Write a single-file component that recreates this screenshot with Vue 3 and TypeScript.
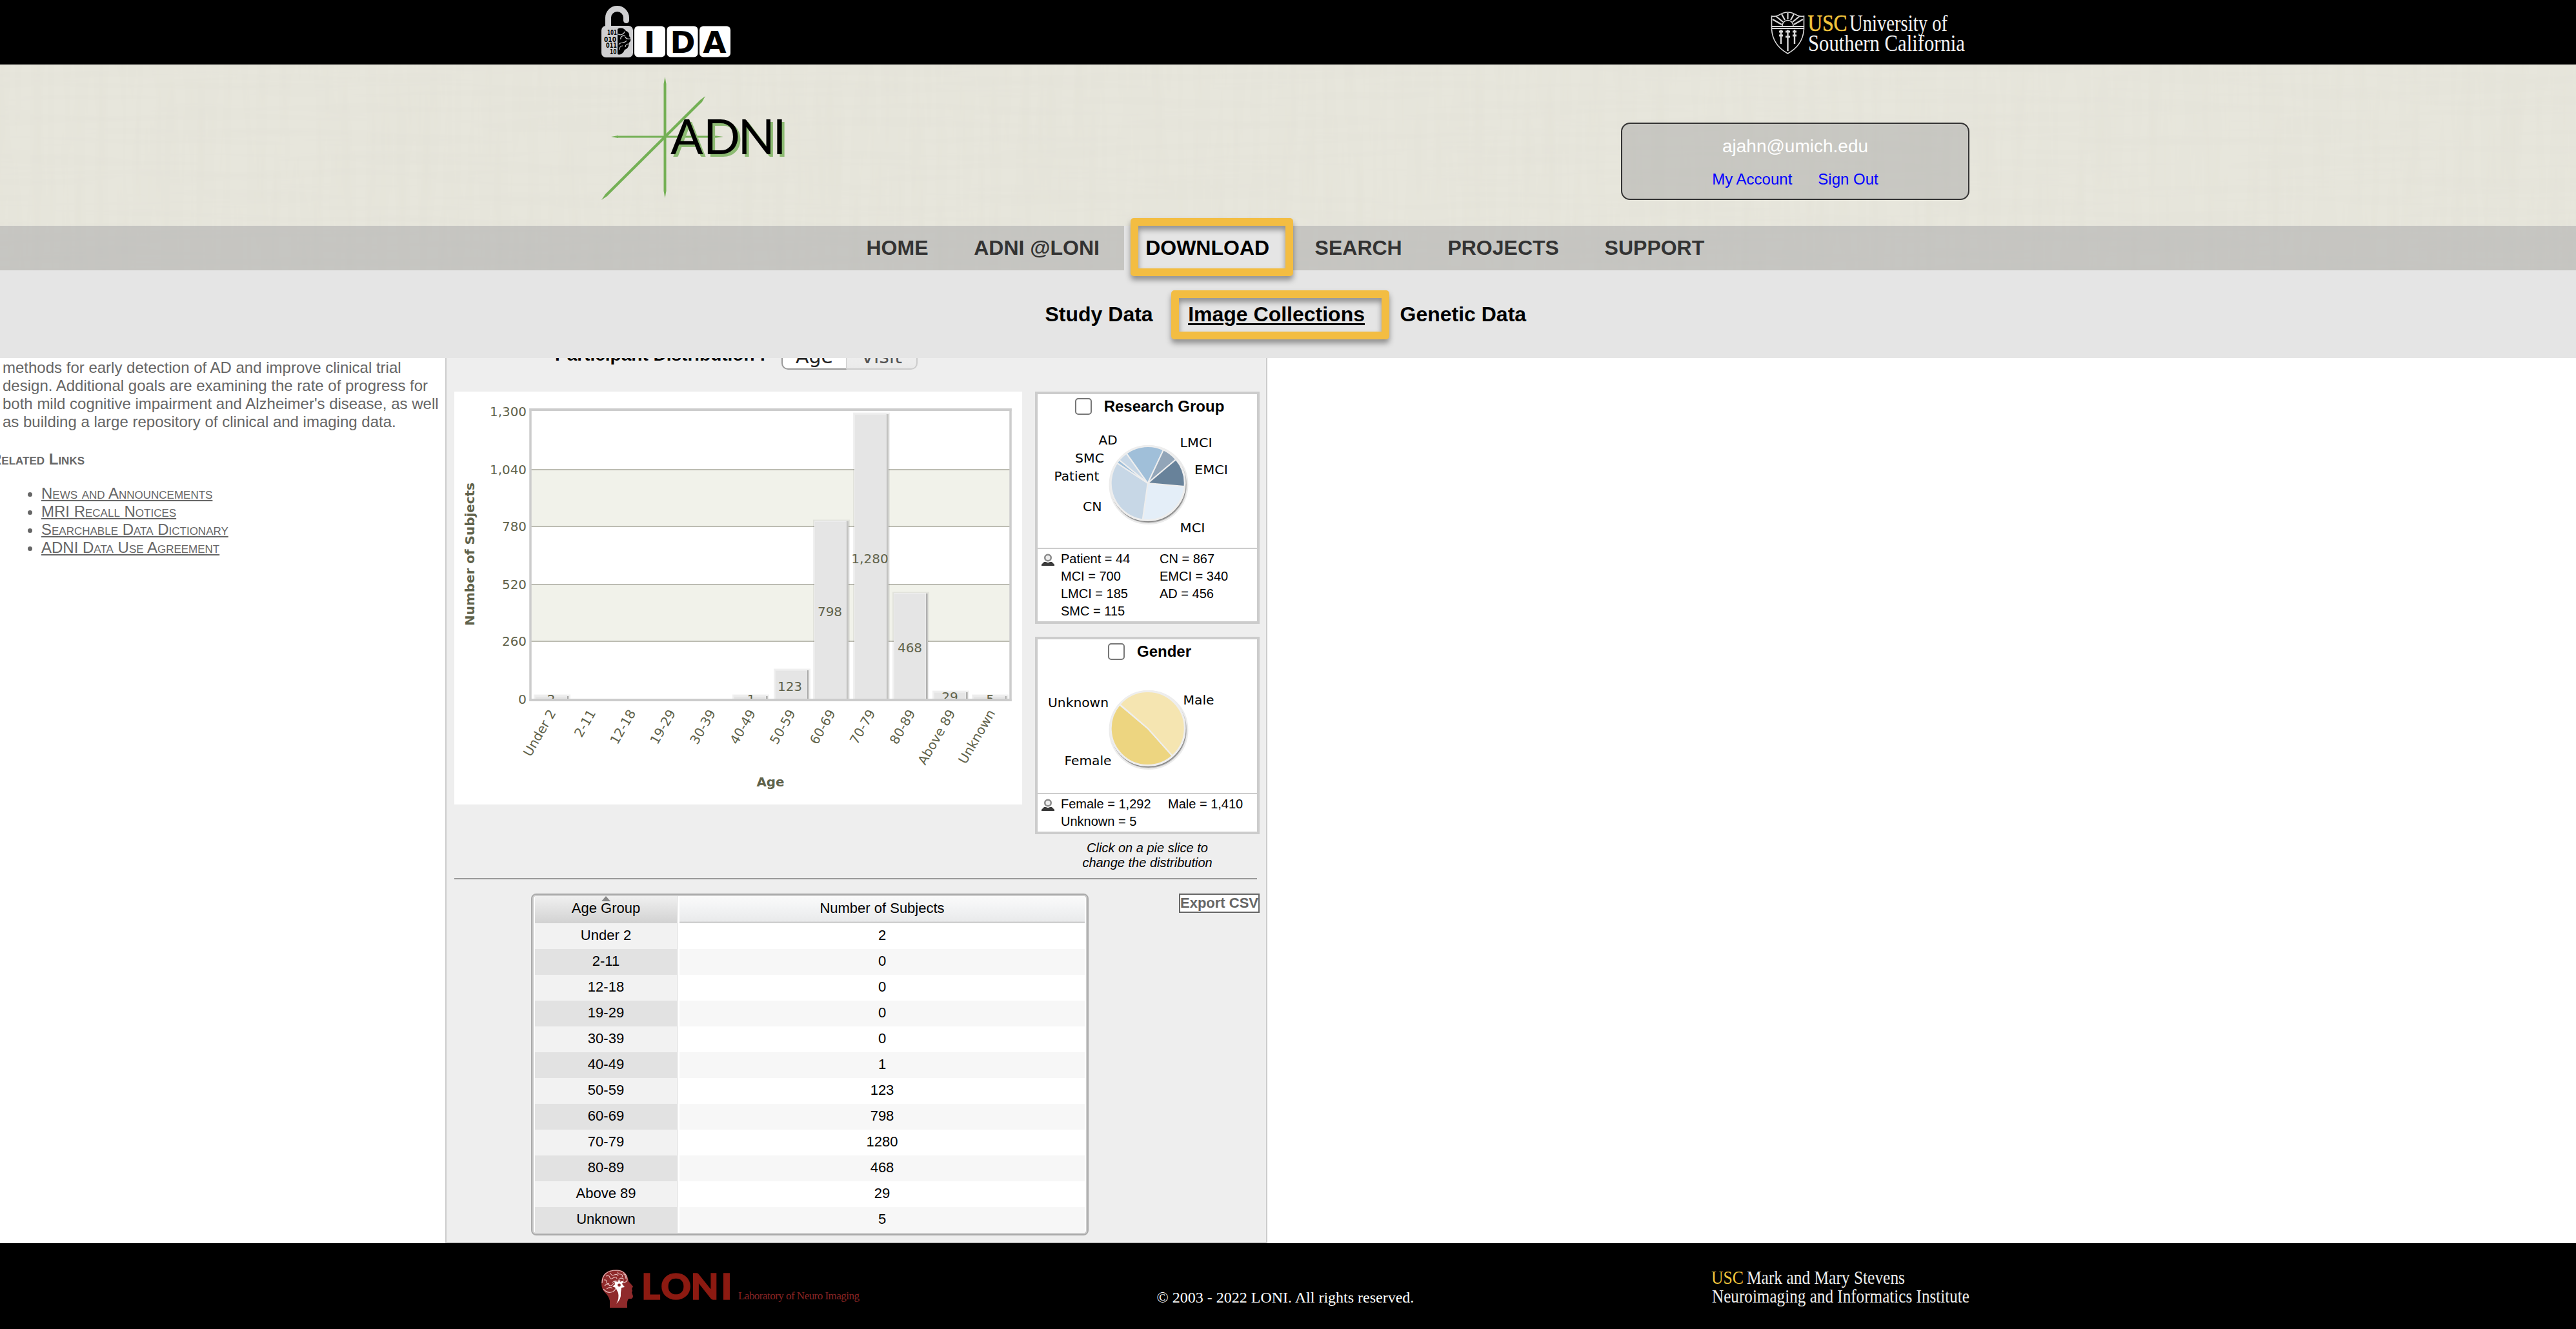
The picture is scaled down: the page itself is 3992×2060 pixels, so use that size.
<script setup lang="ts">
interface Slice { name: string; value: number; color: string }
interface Label { text: string; x: number; y: number; w: number }

const navLeft = ['HOME', 'ADNI @LONI']
const navRight = ['SEARCH', 'PROJECTS', 'SUPPORT']
const links = ['News and Announcements', 'MRI Recall Notices', 'Searchable Data Dictionary', 'ADNI Data Use Agreement']

const ages: [string, number][] = [
  ['Under 2', 2], ['2-11', 0], ['12-18', 0], ['19-29', 0], ['30-39', 0], ['40-49', 1],
  ['50-59', 123], ['60-69', 798], ['70-79', 1280], ['80-89', 468], ['Above 89', 29], ['Unknown', 5],
]

const ticks = [
  { text: '1,300', y: 38, w: 57 }, { text: '1,040', y: 128, w: 57 }, { text: '780', y: 216, w: 38 },
  { text: '520', y: 306, w: 38 }, { text: '260', y: 394, w: 38 }, { text: '0', y: 484, w: 13 },
]
const gridLines = [121, 209, 299, 387]

/* Bar geometry inside the 880 x 640 chart */
const bars = [
  { x: 126, top: 472, text: '2', cx: 150, by: 484 },
  { x: 434, top: 472, text: '1', cx: 460, by: 484 },
  { x: 498, top: 432, text: '123', cx: 520, by: 464 },
  { x: 559, top: 201, text: '798', cx: 582, by: 348 },
  { x: 621, top: 35, text: '1,280', cx: 644, by: 266 },
  { x: 682, top: 313, text: '468', cx: 706, by: 404 },
  { x: 744, top: 466, text: '29', cx: 768, by: 480 },
  { x: 805, top: 472, text: '5', cx: 830.5, by: 484 },
]

const groups: Slice[] = [
  { name: 'MCI', value: 700, color: '#e4eef8' },
  { name: 'CN', value: 867, color: '#c7d7e6' },
  { name: 'Patient', value: 44, color: '#a0bfd9' },
  { name: 'SMC', value: 115, color: '#c7d7e6' },
  { name: 'AD', value: 456, color: '#a0bfd9' },
  { name: 'LMCI', value: 185, color: '#92a5b8' },
  { name: 'EMCI', value: 340, color: '#68829a' },
]
const genders: Slice[] = [
  { name: 'Female', value: 1292, color: '#edd580' },
  { name: 'Unknown', value: 5, color: '#eeeeee' },
  { name: 'Male', value: 1410, color: '#f5e5b1' },
]

function pie(slices: Slice[], start: number, r: number) {
  const total = slices.reduce((s, g) => s + g.value, 0)
  let a = start
  return slices.map((s) => {
    const b = a + (s.value / total) * 360
    const pt = (d: number) => `${(r * Math.cos((d * Math.PI) / 180)).toFixed(2)} ${(r * Math.sin((d * Math.PI) / 180)).toFixed(2)}`
    const d = `M0 0L${pt(a)}A${r} ${r} 0 ${b - a > 180 ? 1 : 0} 1 ${pt(b)}Z`
    a = b
    return { d, color: s.color }
  })
}

/* Label coordinates are relative to the inside of each card */
const groupLabels: Label[] = [
  { text: 'AD', x: 94.5, y: 77.5, w: 29 }, { text: 'LMCI', x: 220.5, y: 81.5, w: 50 },
  { text: 'SMC', x: 58, y: 105.5, w: 45 }, { text: 'Patient', x: 25.5, y: 134, w: 70 },
  { text: 'EMCI', x: 243, y: 124, w: 52 }, { text: 'CN', x: 70, y: 180.5, w: 29.5 },
  { text: 'MCI', x: 220.5, y: 214, w: 39 },
]
const genderLabels: Label[] = [
  { text: 'Unknown', x: 16, y: 104.5, w: 94 }, { text: 'Male', x: 225.5, y: 101, w: 48 },
  { text: 'Female', x: 41.5, y: 194.5, w: 73 },
]
const cards = [
  {
    title: 'Research Group', slices: pie(groups, 5, 57), labels: groupLabels, col: 153,
    stats: ['Patient = 44', 'CN = 867', 'MCI = 700', 'EMCI = 340', 'LMCI = 185', 'AD = 456', 'SMC = 115'],
  },
  {
    title: 'Gender', slices: pie(genders, 48.2, 57), labels: genderLabels, col: 166,
    stats: ['Female = 1,292', 'Male = 1,410', 'Unknown = 5'],
  },
]
const bits = [
  { t: '101', x: 941, y: 53.5, w: 15 }, { t: '010', x: 936, y: 65, w: 19 },
  { t: '011', x: 939, y: 74, w: 17 }, { t: '10', x: 945, y: 84, w: 10.5 },
]
</script>

<template>
  <div class="page">
    <header class="top">
      <svg class="ida" width="204" height="100" viewBox="930 0 204 100">
        <path d="M942.500 44V27.500a14 14 0 0 1 28 0V31.500" fill="none" stroke="#cfcfd1" stroke-width="9" stroke-linecap="round" />
        <rect x="932" y="40" width="49" height="49" rx="7" fill="#cfcfd1" />
        <g class="bits">
          <text v-for="b in bits" :key="b.t" :x="b.x" :y="b.y" :textLength="b.w" lengthAdjust="spacingAndGlyphs">{{ b.t }}</text>
        </g>
        <path d="M957 45c5-3 11-1 13 3c4 1 6 5 5 8c3 3 3 8 0 10c0 6-3 10-7 11c-2 6-7 9-11 7Z" fill="#000" />
        <path d="M958 53c4 2 9 0 10-4M969 56c-4-2-8 1-7 5M977 60c-4 1-7 0-8-3M959 69c3-5 9-1 12-6M960 77c0-5 3-6 5-6M975 68c-4 0-6 2-6 5" fill="none" stroke="#cfcfd1" stroke-width="1.200" />
        <rect x="983" y="40.500" width="48" height="48" rx="6" fill="#fff" />
        <rect x="1033.500" y="40.500" width="48" height="48" rx="6" fill="#fff" />
        <rect x="1084" y="40.500" width="48" height="48" rx="6" fill="#fff" />
        <g class="tile">
          <text x="1006.500" y="82">I</text>
          <text x="1058" y="82">D</text>
          <text x="1107.500" y="82">A</text>
        </g>
      </svg>
      <svg class="usc" width="314" height="100" viewBox="2743 0 314 100">
        <g fill="none" stroke="#d8d8d8" stroke-width="1.600">
          <path d="M2745.500 25q6 1 10-1q8-5 15-5q7 0 15 5q4 2 10 1V45Q2794 70 2770.500 83Q2747 70 2745.500 45Z" />
          <path d="M2746 41H2795M2746 44H2795" stroke-width="2" />
          <path d="M2762 40a8.500 8.500 0 0 1 17 0" />
          <path d="M2770.500 30V20M2766 31l-5-9M2775 31l5-9M2763 34l-11-9M2778 34l11-9M2761 38l-14-8M2780 38l14-8" stroke-width="2.200" />
          <path d="M2760 46v22M2770.500 46v33M2781 46v22" stroke-width="2.400" />
          <path d="M2757 49h6M2767 49h7M2778 49h6M2757 55h6M2767 57h7M2778 55h6" stroke-width="3" />
        </g>
        <text class="gold" x="2801.500" y="47.500" textLength="61" lengthAdjust="spacingAndGlyphs">USC</text>
        <text x="2866" y="47.500" textLength="152" lengthAdjust="spacingAndGlyphs">University of</text>
        <text x="2802" y="78.500" textLength="243" lengthAdjust="spacingAndGlyphs">Southern California</text>
      </svg>
    </header>

    <div class="linen">
      <svg class="weave" width="3992" height="319">
        <filter id="warp" x="0" y="0" width="100%" height="100%">
          <feTurbulence type="fractalNoise" baseFrequency="0.06 0.004" numOctaves="3" seed="4" />
          <feColorMatrix values="0 0 0 0 .76  0 0 0 0 .75  0 0 0 0 .67  1 0 0 0 -.36" />
        </filter>
        <filter id="weft" x="0" y="0" width="100%" height="100%">
          <feTurbulence type="fractalNoise" baseFrequency="0.004 0.08" numOctaves="3" seed="9" />
          <feColorMatrix values="0 0 0 0 .77  0 0 0 0 .76  0 0 0 0 .69  1.1 0 0 0 -.42" />
        </filter>
        <rect width="3992" height="319" filter="url(#warp)" />
        <rect width="3992" height="319" filter="url(#weft)" />
      </svg>
      <div class="banner">
        <svg class="adni" width="300" height="200" viewBox="928 115 300 200">
          <g fill="#74b055">
            <path d="M1030.500 119L1032.500 130V296L1030.500 307L1028.500 296V130Z" />
            <path d="M947 212L958 210V210.500H1110L1121 212L1110 213.500H958V214Z" />
            <path d="M932 310L938 301L1085 155L1093 149L1088 158L941 304Z" />
          </g>
          <g class="adni-word">
            <text x="1039" y="239">A</text><text x="1090" y="239">D</text><text x="1143.500" y="239">N</text><text x="1197.500" y="239">I</text>
          </g>
        </svg>
        <div class="account">
          <div class="mail">ajahn@umich.edu</div>
          <div class="account-links"><a>My Account</a><a>Sign Out</a></div>
        </div>
      </div>
      <nav class="nav">
        <a v-for="n in navLeft" :key="n">{{ n }}</a>
        <a class="active">DOWNLOAD<i class="mark mark-nav"></i></a>
        <a v-for="n in navRight" :key="n">{{ n }}</a>
      </nav>
    </div>

    <nav class="subnav">
      <a>Study Data</a>
      <a class="current"><u>Image Collections</u><i class="mark mark-sub"></i></a>
      <a>Genetic Data</a>
    </nav>

    <main class="main">
      <aside class="side">
        <p>methods for early detection of AD and improve clinical trial<br />design. Additional goals are examining the rate of progress for<br />both mild cognitive impairment and Alzheimer's disease, as well<br />as building a large repository of clinical and imaging data.</p>
        <h3>Related Links</h3>
        <ul><li v-for="l in links" :key="l"><a>{{ l }}</a></li></ul>
      </aside>

      <section class="panel">
        <div class="switch-row">
          <b>Participant Distribution :</b>
          <span class="seg on">Age</span><span class="seg">Visit</span>
        </div>
        <div class="charts">
          <svg class="chart" width="880" height="640" viewBox="0 0 880 640">
            <rect width="880" height="640" fill="#fff" />
            <rect x="118" y="121" width="744" height="88" fill="#f1f2ea" />
            <rect x="118" y="299" width="744" height="88" fill="#f1f2ea" />
            <path v-for="g in gridLines" :key="g" :d="`M118 ${g}H862`" stroke="#bcbcb2" stroke-width="2" />
            <clipPath id="plot"><rect x="118" y="28" width="744" height="448" /></clipPath>
            <g clip-path="url(#plot)">
              <g v-for="b in bars" :key="b.x">
                <rect :x="b.x - 3" :y="b.top - 2.500" width="57" height="500" fill="#000" fill-opacity=".06" />
                <rect :x="b.x + 46" :y="b.top" width="6" height="500" fill="#c6c6c4" />
                <rect :x="b.x + 46" :y="b.top" width="4" height="500" fill="#a9a9a9" />
                <rect :x="b.x - 1" :y="b.top - 1" width="50" height="500" fill="#ececec" />
                <rect :x="b.x" :y="b.top + 1" width="48" height="500" fill="#e5e5e5" />
              </g>
              <text v-for="b in bars" :key="b.text" class="axis" text-anchor="middle" :x="b.cx" :y="b.by">{{ b.text }}</text>
            </g>
            <path d="M118 26V480M862 26V480" stroke="#ccc" stroke-width="3.500" />
            <path d="M116.500 28H863.500M116.500 478H863.500" stroke="#ccc" stroke-width="4" />
            <text v-for="t in ticks" :key="t.text" class="axis" :x="112 - t.w" :y="t.y" :textLength="t.w" lengthAdjust="spacingAndGlyphs">{{ t.text }}</text>
            <text
              v-for="(a, i) in ages" :key="a[0]" class="axis" text-anchor="end"
              :transform="`translate(${158 + i * 61.9} 498) rotate(-60)`"
            >{{ a[0] }}</text>
            <text class="axis bold" transform="translate(30.500 363) rotate(-90)" textLength="222" lengthAdjust="spacingAndGlyphs">Number of Subjects</text>
            <text class="axis bold" x="468.500" y="612" textLength="43" lengthAdjust="spacingAndGlyphs">Age</text>
          </svg>

          <div class="cards">
            <div v-for="c in cards" :key="c.title" class="card">
              <div class="card-head"><span class="box"></span><b>{{ c.title }}</b></div>
              <svg class="pie" width="340" height="238" viewBox="0 0 340 238">
                <circle cx="172" cy="140.500" r="59" fill="none" stroke="#000" stroke-opacity=".08" stroke-width="5" />
                <circle cx="172" cy="140.500" r="57" fill="none" stroke="#000" stroke-opacity=".22" stroke-width="4" />
                <circle cx="171.500" cy="140" r="57" fill="none" stroke="#000" stroke-opacity=".28" stroke-width="3" />
                <g transform="translate(170.700 138)">
                  <circle r="58" fill="none" stroke="#eee" stroke-width="2" />
                  <path v-for="s in c.slices" :key="s.d" :d="s.d" :fill="s.color" stroke="#eee" stroke-width="2" stroke-linejoin="round" />
                </g>
                <text v-for="l in c.labels" :key="l.text" :x="l.x" :y="l.y" :textLength="l.w" lengthAdjust="spacingAndGlyphs">{{ l.text }}</text>
              </svg>
              <div class="stats">
                <svg width="20" height="22" viewBox="0 0 20 22">
                  <circle cx="10" cy="6.500" r="4.800" fill="#eee" stroke="#8c8c8c" stroke-width="2.500" />
                  <path d="M0 19V17L4 13H7Q10 15 13 13H16L20 17V19Z" fill="#3a3a3a" />
                </svg>
                <div class="values" :style="{ gridTemplateColumns: c.col + 'px 1fr' }">
                  <span v-for="s in c.stats" :key="s">{{ s }}</span>
                </div>
              </div>
            </div>
            <div class="hint">Click on a pie slice to<br />change the distribution</div>
          </div>
        </div>
        <div class="rule"></div>
        <div class="bottom">
          <div class="table">
            <div class="tr th"><span>Age Group<svg class="sort" width="14" height="8" viewBox="0 0 14 8"><path d="M7 0L14 8H0Z" fill="#888" /></svg></span><span>Number of Subjects</span></div>
            <div v-for="a in ages" :key="a[0]" class="tr"><span>{{ a[0] }}</span><span>{{ a[1] }}</span></div>
          </div>
          <div class="export">Export CSV</div>
        </div>
      </section>
    </main>

    <footer class="footer">
      <svg class="loni" width="404" height="133" viewBox="930 1927 404 133">
        <path d="M945 2027V2016Q943 2009 939 2005Q932 1999 932 1989Q932 1968 956 1968Q972 1969 974 1986L981 1994L979 1998Q981 2001 979 2003L981 2009Q981 2014 975 2013Q971 2014 972 2027Z" fill="#8f2a2b" />
        <path d="M933 1989Q933 1969 956 1969Q971 1970 972 1984Q971 1988 965 1988Q962 1984 956 1986M935 1998Q942 2006 950 2002Q955 1999 954 1994M936 1984q4-1 4 3t4 2M939 1978q5-2 6 2t5 1q5-3 6 1M946 1973q1 5 6 3t6 2M958 1971q-2 4 3 4t3 5M965 1974q5 2 5 8M937 1993q4-4 7-1t7-3M940 1998q5-4 9-1M949 1988q3-4 7-2M960 1982q3-2 7 1" fill="none" stroke="#e3b9b9" stroke-width="1.200" />
        <path d="M952 1986l6 1l1-5l2 5l6-2l-3 5l4 5l-5 1l-1 8q1 10-7 17q5-8 3-17l-4-8l-5-2l4-3Z" fill="#fff" />
        <circle cx="959.500" cy="1992" r="2.400" fill="#8f2a2b" />
        <g class="loni-word">
          <text x="994" y="2013.500">L</text><text x="1024" y="2013.500" textLength="47" lengthAdjust="spacingAndGlyphs">O</text><text x="1070.500" y="2013.500">N</text><text x="1117.500" y="2013.500">I</text>
        </g>
        <text class="loni-sub" x="1144" y="2014" textLength="188">Laboratory of Neuro Imaging</text>
      </svg>
      <span class="copy">© 2003 - 2022 LONI. All rights reserved.</span>
      <svg class="institute" width="414" height="133" viewBox="2650 1927 414 133">
        <text class="gold" x="2652" y="1989.500" textLength="50" lengthAdjust="spacingAndGlyphs">USC</text>
        <text x="2707" y="1989.500" textLength="245" lengthAdjust="spacingAndGlyphs">Mark and Mary Stevens</text>
        <text x="2653" y="2018.500" textLength="399" lengthAdjust="spacingAndGlyphs">Neuroimaging and Informatics Institute</text>
      </svg>
    </footer>
  </div>
</template>

<style>
body { margin: 0; background: #fff; }
</style>

<style scoped>
.page { width: 3992px; height: 2060px; overflow: hidden; display: flex; flex-direction: column; font-family: "Liberation Sans", Arial, sans-serif; color: #000; }
svg { display: block; flex: none; overflow: visible; }
.top { height: 100px; background: #000; display: flex; justify-content: space-between; padding: 0 935px 0 930px; flex: none; }
.bits text { font: bold 11px "DejaVu Sans", sans-serif; }
.tile text { font: bold 47px "DejaVu Sans", sans-serif; text-anchor: middle; }
.usc text { font: 35px "Liberation Serif", serif; fill: #f4f4f4; }
.usc .gold { fill: #f2c53d; stroke: #f2c53d; stroke-width: .6px; }
.linen { position: relative; background: #e7e6dc; flex: none; }
.weave { position: absolute; left: 0; top: 0; }
.banner { position: relative; height: 250px; display: flex; justify-content: space-between; align-items: flex-start; padding: 0 940px 0 928px; box-sizing: border-box; }
.adni { margin-top: 15px; }
.adni-word { filter: drop-shadow(4.5px 4.5px 0 #8dbb73); }
.adni-word text { font: 75px Lato, sans-serif; }
.account { width: 540px; height: 120px; margin-top: 90px; box-sizing: border-box; border: 2px solid #333; border-radius: 14px; background: rgba(178, 178, 175, .58); text-align: center; display: flex; flex-direction: column; align-items: center; }
.mail { color: #fff; font-size: 28px; line-height: 32px; margin-top: 19px; }
.account-links { display: flex; gap: 40px; font-size: 24px; line-height: 28px; margin-top: 21px; color: #00f; }
.nav { position: relative; height: 69px; display: flex; padding-left: 1311.5px; background: rgba(165, 165, 167, .5); font-size: 32px; font-weight: bold; line-height: 69px; color: #333; }
.nav a { padding: 0 33px 0 31px; margin-right: 6.7px; white-space: nowrap; }
.nav .active { background: #e5e5e5; color: #000; position: relative; padding: 0 33px; margin: 0 6.5px 0 -1.5px; }
.mark { position: absolute; box-sizing: border-box; border: 12px solid #f3bd42; border-radius: 5px; filter: drop-shadow(0 6px 4px rgba(0, 0, 0, .38)); z-index: 3; }
.mark-nav { left: 10px; top: -12px; width: 252px; height: 90px; }
.mark-sub { left: -26px; top: -19px; width: 338px; height: 76px; }
.subnav { height: 136px; box-sizing: border-box; padding: 50px 0 0 1619.5px; background: #e5e5e5; display: flex; gap: 54.5px; font-size: 32px; font-weight: bold; line-height: 36px; white-space: nowrap; flex: none; }
.current { position: relative; }
.current u { text-decoration-thickness: 3px; text-underline-offset: 3px; }
.main { height: 1372px; display: flex; flex: none; background: #fff; overflow: hidden; }
.side { width: 690px; flex: none; color: #666; font-size: 24px; line-height: 28px; overflow: hidden; box-sizing: border-box; padding-top: 1px; }
.side p { margin: 0 0 0 4px; white-space: nowrap; }
.side h3 { margin: 30px 0 0 -15px; font-size: 24px; font-variant: small-caps; }
.side ul { margin: 25px 0 0; padding-left: 64px; font-variant: small-caps; }
.side li a { text-decoration: underline; text-decoration-thickness: 2px; text-underline-offset: 2px; }
.panel { width: 1274px; box-sizing: border-box; background: #eee; border: 2px solid #ccc; border-top: 0; padding: 0 10px 0 12px; overflow: hidden; flex: none; }
.switch-row { margin-top: -31px; height: 83px; display: flex; align-items: flex-start; padding-left: 156px; }
.switch-row b { font-size: 28px; line-height: 32px; margin: 10px 23px 0 0; width: 328px; white-space: nowrap; }
.seg { box-sizing: border-box; height: 49px; font: 30px/53px "DejaVu Sans", sans-serif; text-align: center; border: 2px solid #ccc; border-left: 0; border-radius: 0 10px 10px 0; width: 110px; color: #555; background: linear-gradient(#f4f4f4, #eaeaea); }
.seg.on { width: 101px; border: 2px solid #999; border-right: 1px solid #ccc; border-radius: 10px 0 0 10px; background: #fff; color: #222; }
.charts { display: flex; justify-content: space-between; height: 754px; }
.axis { font: 20px "DejaVu Sans", Verdana, sans-serif; fill: #60624a; }
.axis.bold { font-weight: bold; }
.cards { width: 348px; }
.card { border: 4px solid #ccc; background: #fff; margin-bottom: 20px; height: 352px; }
.card:nth-child(2) { height: 298px; margin-bottom: 10px; }
.card-head { height: 0; display: flex; justify-content: center; }
.card-head .box { box-sizing: border-box; flex: none; width: 26px; height: 26px; margin: 6px 19px 0 7px; border: 2px solid #767676; border-radius: 5px; background: #fff; }
.card-head b { font-size: 24px; line-height: 28px; margin-top: 5px; white-space: nowrap; }
.pie text { font: 20px "DejaVu Sans", Verdana, sans-serif; }
.stats { border-top: 2px solid #ccc; display: flex; padding: 7px 0 0 6px; }
.values { display: grid; flex: 1; font-size: 20px; line-height: 27px; margin: -5px 0 0 10px; white-space: nowrap; }
.hint { font-size: 20px; line-height: 23px; font-style: italic; text-align: center; }
.rule { height: 2px; width: 1244px; background: #999; }
.bottom { margin-top: 22px; padding-left: 119px; display: flex; justify-content: space-between; align-items: flex-start; }
.table { box-sizing: border-box; width: 864px; height: 530px; border: 2px solid #aaa; border-radius: 8px; box-shadow: inset 0 0 0 2px #ccc; padding: 2px 4px; background: #fff; font-size: 22px; }
.tr { display: grid; grid-template-columns: 220px 628px; column-gap: 4px; height: 40px; line-height: 37px; text-align: center; }
.tr span:first-child { background: #f2f2f2; box-shadow: 1px 0 #ddd; }
.tr:nth-child(odd) span:first-child { background: #e2e2e2; }
.tr:nth-child(odd) span { background: #f7f7f7; }
.table .th { height: 42px; line-height: 38px; }
.table .th span { background: linear-gradient(#fafafa, #f3f4f5 40%, #e9eaeb 92%, #ccc 97%); position: relative; }
.table .th span:first-child { background: linear-gradient(#f0f0f0, #d2d2d2); }
.sort { position: absolute; left: 103px; top: 0; }
.export { box-sizing: border-box; width: 125px; height: 30px; border: 2px solid #666; background: #fff; color: #666; font-weight: bold; font-size: 22px; line-height: 26px; text-align: center; white-space: nowrap; }
.footer { height: 133px; background: #000; display: flex; padding: 0 928px 0 930px; justify-content: space-between; flex: none; color: #fff; }
.loni-word text { font: 900 56px Lato, sans-serif; fill: #8c1a11; stroke: #8c1a11; stroke-width: 1.5px; }
.loni-sub { font: 17px "Liberation Serif", serif; fill: #872424; }
.copy { font: 24px/28px "Liberation Serif", serif; margin: 70px 0 0 57px; width: 456px; white-space: nowrap; flex: none; }
.institute text { font: 29px "Liberation Serif", serif; fill: #eee; }
.institute .gold { fill: #f2c53d; }
</style>
